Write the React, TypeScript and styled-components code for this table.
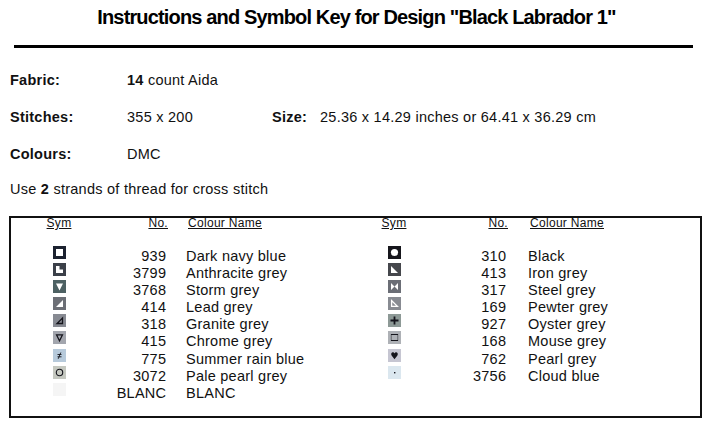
import React from "react";
import styled, { createGlobalStyle } from "styled-components";

const GlobalStyle = createGlobalStyle`
  html, body { margin: 0; padding: 0; background: #ffffff; }
  body {
    font-family: "Liberation Sans", Arial, sans-serif;
    color: #111;
  }
`;

const Page = styled.div`
  width: 713px;
  height: 424px;
  overflow: hidden;
  display: flex;
  flex-direction: column;
`;

const Title = styled.h1`
  margin: 0;
  padding-top: 6px;
  font-size: 20px;
  line-height: 23px;
  font-weight: 700;
  letter-spacing: -0.85px;
  text-align: center;
  color: #000;
`;

const Rule = styled.div`
  margin: 16px 20px 0 14px;
  height: 3px;
  background: #000;
`;

const Info = styled.div`
  display: flex;
  flex-direction: column;
  gap: 20px;
  margin: 24px 0 0 10px;
  font-size: 14.5px;
  line-height: 17px;
  letter-spacing: 0.25px;
`;

const InfoRow = styled.div<{ $tight?: boolean }>`
  display: flex;
  margin-top: ${(p) => (p.$tight ? "-2px" : "0")};
`;

const Label = styled.span<{ $w: number }>`
  width: ${(p) => p.$w}px;
  flex: none;
  font-weight: 700;
`;

const Value = styled.span<{ $w?: number }>`
  ${(p) => (p.$w ? `width: ${p.$w}px; flex: none;` : "")}
`;

const Table = styled.div`
  margin: 18px 0 0 9px;
  width: 693px;
  height: 202px;
  box-sizing: border-box;
  border: 2px solid #111;
  padding-left: 24px;
  display: flex;
`;

const Panel = styled.div<{ $w?: number; $num: number; $gap: number }>`
  ${(p) => (p.$w ? `width: ${p.$w}px; flex: none;` : "flex: 1;")}
  display: grid;
  grid-template-columns: 48px ${(p) => p.$num}px 1fr;
  grid-template-rows: 15px 15px;
  grid-auto-rows: 17.1px;
  align-content: start;
  --name-gap: ${(p) => p.$gap}px;
`;

const Head = styled.div<{ $align: "center" | "right" | "left" }>`
  font-size: 12px;
  line-height: 12px;
  letter-spacing: 0.3px;
  text-decoration: underline;
  text-underline-offset: 1px;
  margin-top: -1px;
  text-align: ${(p) => p.$align};
  padding-left: ${(p) => (p.$align === "left" ? "calc(var(--name-gap) + 2px)" : "0")};
  margin-right: ${(p) => (p.$align === "right" ? "-2px" : "0")};
  color: #111;
`;

const Spacer = styled.div`
  grid-column: 1 / -1;
`;

const SymCell = styled.div`
  display: flex;
  justify-content: center;
  align-items: flex-start;
`;

const Num = styled.div`
  font-size: 14.5px;
  line-height: 17px;
  letter-spacing: 0.25px;
  text-align: right;
  margin-right: -0.25px;
  white-space: nowrap;
`;

const Name = styled.div`
  font-size: 14.5px;
  line-height: 17px;
  letter-spacing: 0.25px;
  padding-left: var(--name-gap);
  white-space: nowrap;
`;

const Swatch = styled.svg`
  display: block;
  width: 13px;
  height: 13px;
  margin-top: -2px;
`;

type SymKind =
  | "square"
  | "corner"
  | "down"
  | "lowerRight"
  | "rightTriOutline"
  | "nabla"
  | "notEqual"
  | "circleOutline"
  | "blank"
  | "dot"
  | "disc"
  | "lowerLeft"
  | "bowtie"
  | "lowerLeftOutline"
  | "plus"
  | "rect"
  | "heart";

const Glyph: React.FC<{ kind: SymKind; bg: string }> = ({ kind, bg }) => {
  const W = "#ffffff";
  const D = "#15151c";
  let inner: React.ReactNode = null;
  switch (kind) {
    case "square":
      inner = <rect x="3" y="3" width="7" height="7" fill={W} />;
      break;
    case "corner":
      inner = <path d="M3 3 H6.5 V6.5 H10 V10 H3 Z" fill={W} />;
      break;
    case "down":
      inner = <path d="M3 3.5 H10 L6.5 10.5 Z" fill={W} />;
      break;
    case "lowerRight":
      inner = <path d="M3 10 H10 V3 Z" fill={W} />;
      break;
    case "rightTriOutline":
      inner = <path d="M4 9.5 H9.5 V4 Z" fill="none" stroke={D} strokeWidth="1.3" />;
      break;
    case "nabla":
      inner = <path d="M3.5 3.8 H9.5 L6.5 9.8 Z" fill="none" stroke={D} strokeWidth="1.2" />;
      break;
    case "notEqual":
      inner = (
        <g stroke={D} strokeWidth="0.9" fill="none">
          <path d="M4.5 5.5 H8.5 M4.5 7.8 H8.5 M7.8 3.5 L5.2 9.8" />
        </g>
      );
      break;
    case "circleOutline":
      inner = <circle cx="6.5" cy="6.5" r="3.2" fill="none" stroke={D} strokeWidth="1.1" />;
      break;
    case "blank":
      inner = null;
      break;
    case "dot":
      inner = <rect x="6" y="6" width="1.4" height="1.4" fill={D} />;
      break;
    case "disc":
      inner = <circle cx="6.5" cy="6.5" r="3.6" fill={W} />;
      break;
    case "lowerLeft":
      inner = <path d="M3 3 V10 H10 Z" fill={W} />;
      break;
    case "bowtie":
      inner = <path d="M3 3 L6.5 6.5 L3 10 Z M10 3 L6.5 6.5 L10 10 Z" fill={W} />;
      break;
    case "lowerLeftOutline":
      inner = <path d="M3.6 3.6 V9.4 H9.4 Z" fill="none" stroke={W} strokeWidth="1.3" />;
      break;
    case "plus":
      inner = <path d="M6.5 2.5 V10.5 M2.5 6.5 H10.5" stroke={D} strokeWidth="1.8" />;
      break;
    case "rect":
      inner = (
        <g>
          <rect x="3.2" y="3.5" width="6.6" height="6" fill="none" stroke="#55575c" strokeWidth="0.8" />
          <path d="M3 3.5 H10 M3 9.5 H10" stroke={D} strokeWidth="1.1" />
        </g>
      );
      break;
    case "heart":
      inner = (
        <path
          d="M6.5 10.2 L3.6 6.4 C2.6 4.8 3.6 3.3 4.9 3.3 C5.7 3.3 6.3 3.9 6.5 4.5 C6.7 3.9 7.3 3.3 8.1 3.3 C9.4 3.3 10.4 4.8 9.4 6.4 Z"
          fill={D}
        />
      );
      break;
  }
  return (
    <Swatch viewBox="0 0 13 13" aria-hidden="true">
      <rect x="0" y="0" width="13" height="13" fill={bg} />
      {inner}
    </Swatch>
  );
};

type Entry = { kind: SymKind; bg: string; no: string; name: string };

const leftEntries: Entry[] = [
  { kind: "square", bg: "#1c2230", no: "939", name: "Dark navy blue" },
  { kind: "corner", bg: "#3b4049", no: "3799", name: "Anthracite grey" },
  { kind: "down", bg: "#4d6163", no: "3768", name: "Storm grey" },
  { kind: "lowerRight", bg: "#6c6f76", no: "414", name: "Lead grey" },
  { kind: "rightTriOutline", bg: "#878a92", no: "318", name: "Granite grey" },
  { kind: "nabla", bg: "#a3a6ae", no: "415", name: "Chrome grey" },
  { kind: "notEqual", bg: "#b7cadb", no: "775", name: "Summer rain blue" },
  { kind: "circleOutline", bg: "#c5c8c0", no: "3072", name: "Pale pearl grey" },
  { kind: "blank", bg: "#f5f5f5", no: "BLANC", name: "BLANC" },
];

const rightEntries: Entry[] = [
  { kind: "disc", bg: "#16161c", no: "310", name: "Black" },
  { kind: "lowerLeft", bg: "#45474c", no: "413", name: "Iron grey" },
  { kind: "bowtie", bg: "#6b6e76", no: "317", name: "Steel grey" },
  { kind: "lowerLeftOutline", bg: "#888b92", no: "169", name: "Pewter grey" },
  { kind: "plus", bg: "#8d9996", no: "927", name: "Oyster grey" },
  { kind: "rect", bg: "#aeb1b6", no: "168", name: "Mouse grey" },
  { kind: "heart", bg: "#c6c6d2", no: "762", name: "Pearl grey" },
  { kind: "dot", bg: "#dbe7ef", no: "3756", name: "Cloud blue" },
];

const KeyPanel: React.FC<{ entries: Entry[]; width?: number; num: number; gap: number }> = ({
  entries,
  width,
  num,
  gap,
}) => (
  <Panel $w={width} $num={num} $gap={gap}>
    <Head $align="center">Sym</Head>
    <Head $align="right">No.</Head>
    <Head $align="left">Colour Name</Head>
    <Spacer />
    {entries.map((e) => (
      <React.Fragment key={e.no}>
        <SymCell>
          <Glyph kind={e.kind} bg={e.bg} />
        </SymCell>
        <Num>{e.no}</Num>
        <Name>{e.name}</Name>
      </React.Fragment>
    ))}
  </Panel>
);

export default function App() {
  return (
    <Page>
      <GlobalStyle />
      <Title>Instructions and Symbol Key for Design "Black Labrador 1"</Title>
      <Rule />
      <Info>
        <InfoRow>
          <Label $w={117}>Fabric:</Label>
          <Value>
            <b>14</b> count Aida
          </Value>
        </InfoRow>
        <InfoRow>
          <Label $w={117}>Stitches:</Label>
          <Value $w={145}>355 x 200</Value>
          <Label $w={48}>Size:</Label>
          <Value>25.36 x 14.29 inches or 64.41 x 36.29 cm</Value>
        </InfoRow>
        <InfoRow>
          <Label $w={117}>Colours:</Label>
          <Value>DMC</Value>
        </InfoRow>
        <InfoRow $tight>
          <Value>
            Use <b>2</b> strands of thread for cross stitch
          </Value>
        </InfoRow>
      </Info>
      <Table>
        <KeyPanel entries={leftEntries} width={335} num={83} gap={20} />
        <KeyPanel entries={rightEntries} num={88} gap={22} />
      </Table>
    </Page>
  );
}
